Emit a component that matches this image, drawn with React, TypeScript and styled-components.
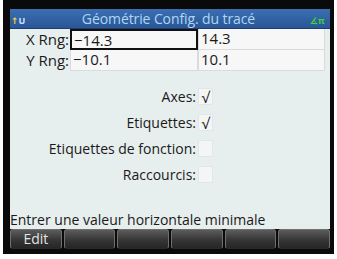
import styled, { createGlobalStyle } from 'styled-components';

const GlobalStyle = createGlobalStyle`
  html, body {
    margin: 0;
    padding: 0;
    background: #ffffff;
  }
  body {
    font-family: "Open Sans", "DejaVu Sans", sans-serif;
  }
`;

const Frame = styled.div`
  margin-left: 3px;
  width: 331px;
  box-sizing: border-box;
  padding: 9px 4px 5px 7px;
  background: #0a0a0a;
`;

const Screen = styled.div`
  width: 320px;
  height: 240px;
  display: flex;
  flex-direction: column;
  background: #e7eeee;
  overflow: hidden;
`;

const TitleBar = styled.div`
  height: 19px;
  display: flex;
  align-items: center;
  justify-content: space-between;
  padding: 0 4px 0 1px;
  background: linear-gradient(#3a6fb3, #2a5695);
  border-bottom: 1px solid #1d3e74;
`;

const Title = styled.span`
  flex: 1;
  text-align: center;
  color: #afd6f6;
  font-size: 14px;
  line-height: 19px;
  letter-spacing: -0.1px;
`;

const Annunciator = styled.span<{ $color: string }>`
  color: ${(p) => p.$color};
  font-size: 9px;
  font-weight: bold;
  width: 16px;
  padding-top: 4px;
`;

const Arrow = styled.span`
  color: #f4d23a;
`;

const Grid = styled.div`
  display: grid;
  grid-template-columns: 60px 128px 127px;
`;

const RowLabel = styled.div`
  font-size: 15px;
  color: #1a1a1a;
  text-align: right;
  height: 21px;
  line-height: 21px;
  padding-right: 1px;
`;

const Cell = styled.div<{ $active?: boolean }>`
  box-sizing: border-box;
  height: 21px;
  line-height: 18px;
  font-size: 15px;
  color: #1a1a1a;
  background: #f7f7f7;
  padding-left: 2px;
  border: ${(p) => (p.$active ? '2px solid #111' : '1px solid #d9dcdc')};
  border-top: ${(p) => (p.$active ? '2px solid #111' : 'none')};
`;

const Options = styled.div`
  display: flex;
  flex-direction: column;
  gap: 9px;
  padding-top: 17px;
`;

const OptionRow = styled.div`
  display: flex;
  align-items: center;
  height: 17px;
`;

const OptionLabel = styled.span`
  width: 186px;
  text-align: right;
  font-size: 14px;
  color: #1a1a1a;
  padding-right: 2px;
`;

const Check = styled.span`
  width: 15px;
  height: 17px;
  background: #f4f6f6;
  border: 1px solid #e2e6e6;
  box-sizing: border-box;
  font-size: 15px;
  line-height: 16px;
  text-align: center;
  color: #222;
`;

const Spacer = styled.div`
  flex: 1;
`;

const Status = styled.div`
  font-size: 14px;
  color: #1a1a1a;
  height: 19px;
  line-height: 19px;
`;

const Menu = styled.div`
  display: grid;
  grid-template-columns: repeat(6, 1fr);
  gap: 2px;
  height: 20px;
  background: #0a0a0a;
`;

const MenuKey = styled.div`
  box-sizing: border-box;
  border-radius: 3px;
  border: 1px solid #707070;
  border-bottom-color: #2a2a2a;
  background: linear-gradient(#5c5c5c, #363636 55%, #262626);
  color: #e4e4e4;
  font-size: 14px;
  line-height: 18px;
  text-align: center;
`;

const settings = [
  { label: 'Axes:', checked: true },
  { label: 'Etiquettes:', checked: true },
  { label: 'Etiquettes de fonction:', checked: false },
  { label: 'Raccourcis:', checked: false },
];

export default function App() {
  return (
    <>
      <GlobalStyle />
      <Frame>
        <Screen>
          <TitleBar>
            <Annunciator $color="#cfe2ff">
              <Arrow>↑</Arrow>U
            </Annunciator>
            <Title>Géométrie Config. du tracé</Title>
            <Annunciator $color="#3fd23a">∡π</Annunciator>
          </TitleBar>
          <Grid>
            <RowLabel>X Rng:</RowLabel>
            <Cell $active>−14.3</Cell>
            <Cell>14.3</Cell>
            <RowLabel>Y Rng:</RowLabel>
            <Cell>−10.1</Cell>
            <Cell>10.1</Cell>
          </Grid>
          <Options>
            {settings.map((s) => (
              <OptionRow key={s.label}>
                <OptionLabel>{s.label}</OptionLabel>
                <Check>{s.checked ? '√' : ''}</Check>
              </OptionRow>
            ))}
          </Options>
          <Spacer />
          <Status>Entrer une valeur horizontale minimale</Status>
          <Menu>
            <MenuKey>Edit</MenuKey>
            <MenuKey />
            <MenuKey />
            <MenuKey />
            <MenuKey />
            <MenuKey />
          </Menu>
        </Screen>
      </Frame>
    </>
  );
}
